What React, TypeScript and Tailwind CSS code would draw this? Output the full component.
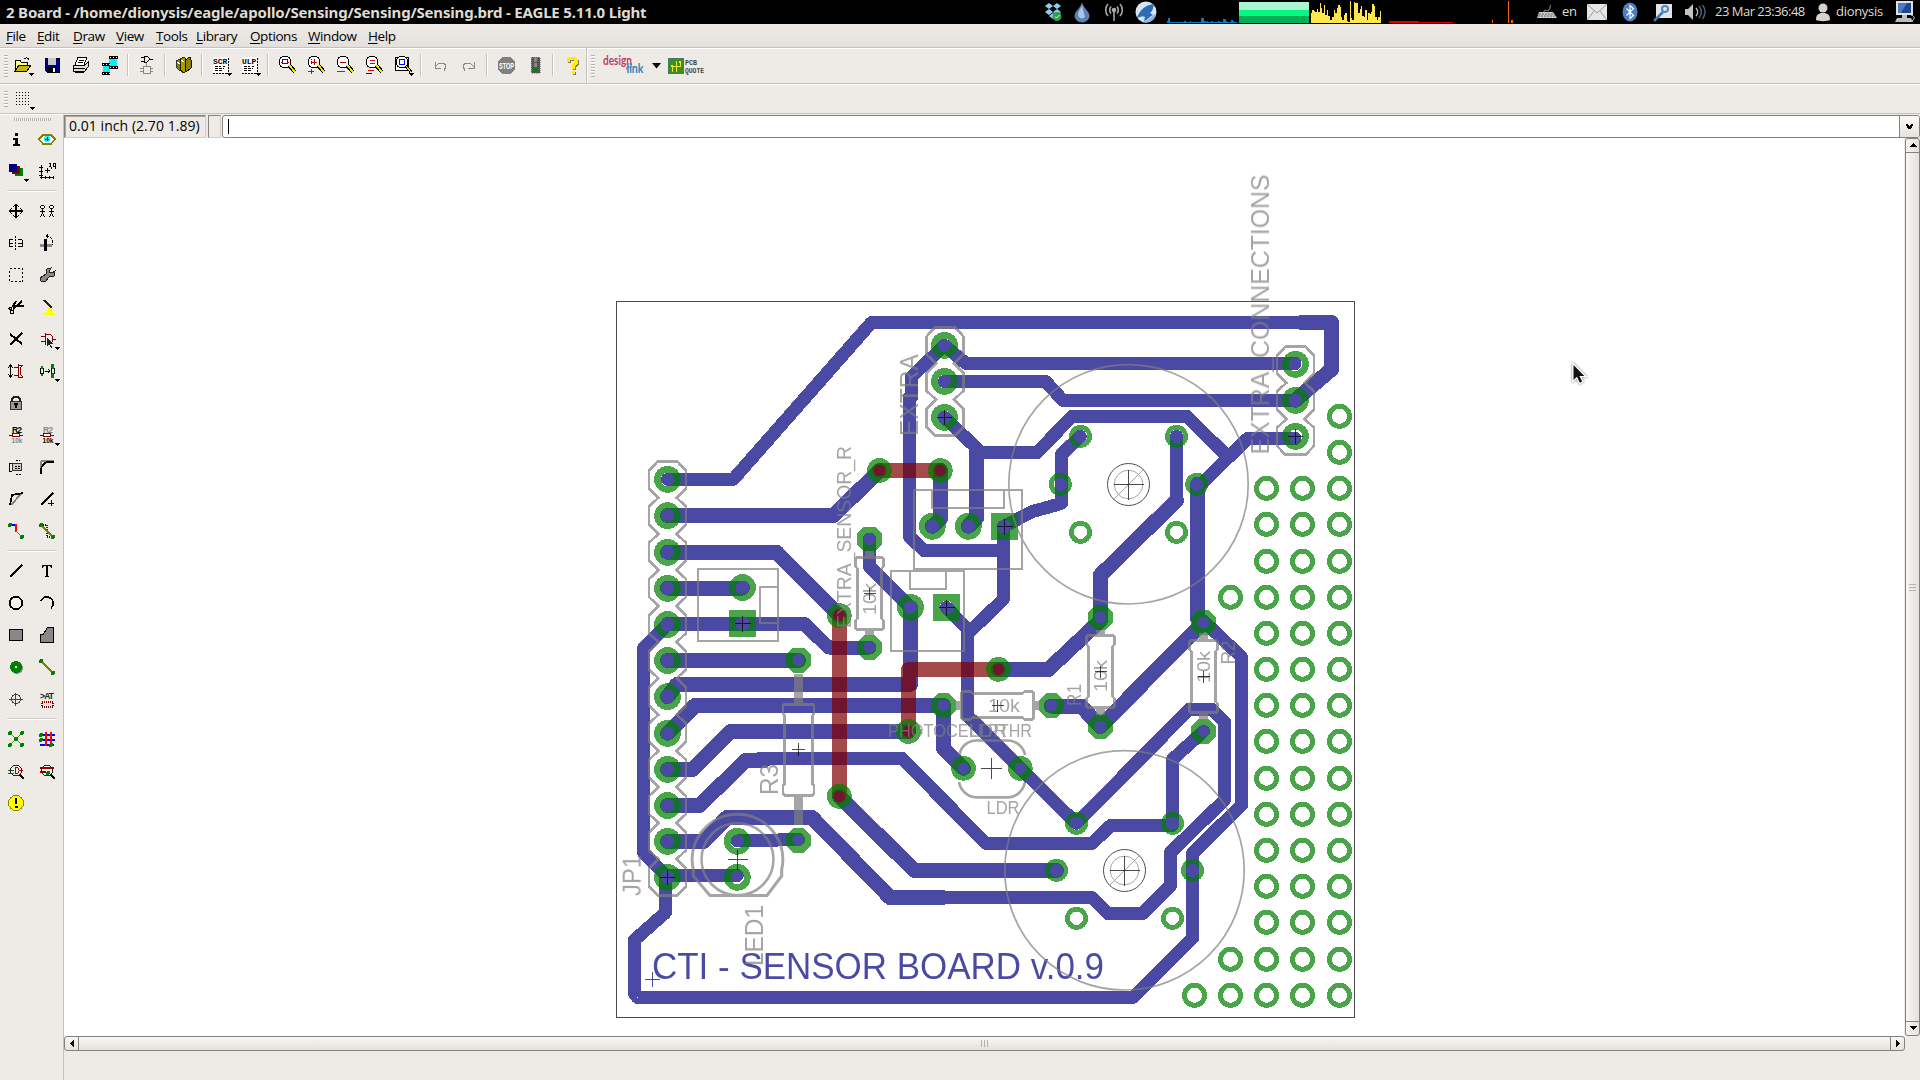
import React from "react";

type Pt = [number, number];
const P = ({ children, w = 24, h = 24, className = "" }: { children: React.ReactNode; w?: number; h?: number; className?: string }) => (
  <svg width={w} height={h} viewBox={`0 0 ${w} ${h}`} className={`shrink-0 ${className}`} fill="none" shapeRendering="crispEdges">
    {children}
  </svg>
);

/* ---------- system tray ---------- */
const cpu = [3, 9, 2, 1, 2, 1, 1, 2, 1, 1, 2, 1, 3, 1, 2, 1, 4, 2, 1, 1, 2, 1, 1, 2, 9, 10, 4, 2, 3, 2, 1, 3, 2, 1, 2, 1, 3, 2, 1, 8, 7, 3, 2, 1, 2, 5, 3, 2, 1];
const net = [14, 18, 17, 16, 20, 16, 28, 22, 15, 26, 12, 19, 10, 5, 4, 9, 19, 14, 22, 26, 23, 8, 4, 12, 14, 3, 2, 31, 7, 4, 30, 29, 28, 14, 20, 25, 10, 8, 18, 5, 14, 13, 16, 27, 24, 8, 5, 9, 17];

const Tray = () => (
  <div className="flex h-6 items-center text-[#dfdbd2]">
    <svg width="18" height="20" viewBox="0 0 18 20">
      <path d="M5 1l4 3-4 3-4-3zM13 1l4 3-4 3-4-3zM5 7l4 3-4 3-4-3zM13 7l4 3-4 3-4-3zM5 14l4-3 4 3-4 3z" fill="#8fcdf7" />
      <circle cx="13" cy="14.500" r="4.500" fill="#2f9e44" />
      <path d="M11 14.500l1.500 1.500 3-3" stroke="#fff" fill="none" />
    </svg>
    <svg width="18" height="22" viewBox="0 0 18 22" className="ml-[11px]">
      <path d="M9 1C8 7 1.500 10 1.500 15a7.500 6.500 0 0015 0C16.500 10 10 7 9 1z" fill="#5b7fae" />
      <path d="M9 4C8 8 5 10 5 14a4 4 0 007 2z" fill="#a9c4e6" />
    </svg>
    <svg width="20" height="20" viewBox="0 0 20 20" className="ml-[13px]" fill="none" stroke="#a5a5a5" strokeWidth="1.600">
      <path d="M4 2a9 9 0 000 12M16 2a9 9 0 010 12M7 4.500a6 6 0 000 7M13 4.500a6 6 0 010 7M10 8v11" />
      <circle cx="10" cy="8" r="1.500" fill="#bbb" />
    </svg>
    <svg width="24" height="24" viewBox="0 0 24 24" className="ml-[10px]">
      <circle cx="12" cy="12" r="10.500" fill="#d7e5f2" />
      <path d="M3 18C6 9 12 5 20 4c-1 4-1 7-4 9l3 2c-3 1-5 5-9 6l1-4c-3-1-5 0-8 1z" fill="#2b6cb3" />
      <path d="M8 22a10.500 10.500 0 0014-8c-4 0-4 6-14 8z" fill="#8fb2d8" />
    </svg>
    <svg width="70" height="24" viewBox="0 0 70 24" className="ml-[9px]" shapeRendering="crispEdges">
      {cpu.map((v, i) => <rect key={i} x={i * 1.43} y={23 - v * 0.55} width="1.430" height={v * 0.55} fill="#0a7ac4" />)}
    </svg>
    <div className="ml-[2px] mt-px h-[21px] w-[70px] bg-[#abf5d0]">
      <div className="h-2" />
      <div className="h-[6px] bg-[#00fb80]" />
      <div className="h-[7px] bg-[#00b058]" />
    </div>
    <svg width="70" height="24" viewBox="0 0 70 24" className="ml-[2px]" shapeRendering="crispEdges">
      {net.map((v, i) => <rect key={i} x={i * 1.43} y={23 - v * 0.7} width="1.430" height={v * 0.7} fill="#fde74a" />)}
    </svg>
    <svg width="64" height="24" viewBox="0 0 64 24" className="ml-2" shapeRendering="crispEdges">
      <path d="M0 21h30v1h34v1H0z" fill="#d80000" />
    </svg>
    <svg width="24" height="24" viewBox="0 0 24 24" className="ml-[38px]" shapeRendering="crispEdges">
      <path d="M1 23v-3h1v3zM17 23V1h1v22zM20 23v-3h2v3z" fill="#f26311" />
    </svg>
    <svg width="22" height="20" viewBox="0 0 22 20" className="ml-[21px]">
      <path d="M3 10h14l4 6H1z" fill="#c9c9c9" />
      <path d="M3 12h15M2 14h17" stroke="#666" strokeDasharray="2 1" />
      <path d="M8 10c0-4 3 0 5-2s0-4 2-5" stroke="#999" fill="none" />
    </svg>
    <span className="ml-[4px] w-[15px] font-['Open_Sans'] text-[13px] tracking-[-0.3px]">en</span>
    <svg width="20" height="16" viewBox="0 0 20 16" className="ml-[10px]">
      <rect width="20" height="16" rx="1" fill="#e6e6e6" />
      <path d="M1 1l9 8 9-8M1 15l6-8M19 15l-6-8" stroke="#999" fill="none" />
    </svg>
    <svg width="16" height="20" viewBox="0 0 16 20" className="ml-[15px]">
      <ellipse cx="8" cy="10" rx="7.500" ry="9.500" fill="#4a7fc4" />
      <path d="M4.500 6.500l7 7L8 16.500v-13l3.500 3-7 7" stroke="#fff" fill="none" strokeWidth="1.200" />
    </svg>
    <svg width="20" height="20" viewBox="0 0 20 20" className="ml-[15px]">
      <path d="M3 2h16v14H3z" fill="#e4e4e4" />
      <path d="M1 19l9-9" stroke="#3e78bd" strokeWidth="2.500" />
      <circle cx="12" cy="7" r="3" fill="none" stroke="#4f86c6" strokeWidth="2" />
    </svg>
    <svg width="22" height="20" viewBox="0 0 22 20" className="ml-[11px]" fill="none">
      <path d="M1 7h3l5-5v16l-5-5H1z" fill="#c4c4c4" />
      <path d="M12 6a6 6 0 010 8" stroke="#bbb" strokeWidth="1.500" />
      <path d="M15 4a9 9 0 010 12M18.500 3a11 11 0 010 14" stroke="#4b5d78" strokeWidth="1.500" />
    </svg>
    <span className="ml-[9px] w-[91px] whitespace-nowrap font-['Open_Sans'] text-[13px] tracking-[-0.5px]">23 Mar 23:36:48</span>
    <svg width="16" height="20" viewBox="0 0 16 20" className="ml-[9px]" fill="#d6d3cc">
      <circle cx="8" cy="6" r="4.500" />
      <path d="M1 18c0-5 2-7 7-7s7 2 7 7c-3 1.500-11 1.500-14 0z" />
    </svg>
    <span className="ml-[5px] w-[49px] font-['Open_Sans'] text-[13px] tracking-[-0.3px]">dionysis</span>
    <svg width="22" height="24" viewBox="0 0 22 24" className="ml-[9px] mr-[4px]">
      <path d="M2 1h17v14H2z" fill="#e1e1df" />
      <path d="M4 3h13v10H4z" fill="#1b4795" />
      <path d="M4 3h9L7 13H4z" fill="#4c7cc0" />
      <path d="M8 15h5v3H8zM3 18h14l2 4H1z" fill="#bdbdb8" />
      <path d="M17 15c4 1 4 4 1 6" stroke="#ddd" fill="none" />
    </svg>
  </div>
);

/* ---------- top toolbar icons ---------- */
const Drop = () => <path d="M17 20h6l-3 3z" fill="#000" />;
const Mag = ({ children }: { children?: React.ReactNode }) => (
  <P>
    <circle cx="10" cy="9" r="6" fill="#fff" stroke="#000" />
    <path d="M14 12l6 7" stroke="#000" strokeWidth="4" />
    <path d="M14 12l6 7" stroke="#f2e600" strokeWidth="2" />
    {children}
  </P>
);
const Sheet = ({ t }: { t: string }) => (
  <P>
    <path d="M4 4h15v16H4z" fill="#fff" />
    <path d="M19 5v15M4 20h15" stroke="#000" strokeDasharray="2 1" />
    <path d="M6 13h6M6 15h9M6 17h7M14 13h2" stroke="#000" strokeDasharray="3 1" />
    <text x="4" y="11" fontSize="8" fontWeight="700" fontFamily="Liberation Mono" fill="#000">{t}</text>
    <Drop />
  </P>
);
const topIcons: React.ReactNode[] = [
  <P><path d="M4 18V7h5l1 2h6v3" stroke="#000" fill="#ffff80" /><path d="M4 18l4-6h12l-4 6z" fill="#c8b400" stroke="#000" /><path d="M13 6c2-2 4-1 5 1" stroke="#000" /><Drop /></P>,
  <P><path d="M5 5h14v14H7l-2-2z" fill="#000080" stroke="#000" /><path d="M8 5h8v7H8z" fill="#c8c8c8" /><path d="M8 14h8v5H8z" fill="#000" /><path d="M13 15h2v4h-2z" fill="#fff" /></P>,
  <P><path d="M9 4h9l-3 8H6z" fill="#fff" stroke="#000" /><path d="M10 7h5M9 9h5" stroke="#000" /><path d="M4 12h12l3-3v5l-3 4H4z" fill="#ddd" stroke="#000" /><path d="M6 19h9M5 15h11" stroke="#000" /><path d="M12 16h3v1h-3z" fill="#e6d800" /></P>,
  <P><path d="M11 6h8v8h-8zM5 13h7v7H5z" fill="#00f2f2" /><path d="M11 4h9M11 14h9M4 11h8M4 20h8" stroke="#000" strokeWidth="3" /><path d="M12 4h8M12 14h8M5 11h8M5 20h8" stroke="#fff" strokeDasharray="1 2" /></P>,
  <P><path d="M9 3h3l3 3-3 3H9zM6 4h3M6 8h3M15 6h3" stroke="#000" /><path d="M8 13h7v7H8zM5 15h3M5 18h3M15 15h3M15 18h3M11 13v-3" stroke="#888" /></P>,
  <P><path d="M4 8l4-2 3 3v10l-4-2-3-3z" fill="#808000" stroke="#333" /><path d="M8 6l4-2 3 3v10l-3 3-4-3z" fill="#a89c00" stroke="#222" /><path d="M13 7l5-3 1 3v8l-5 4z" fill="#8a8200" stroke="#111" /><path d="M5 9l3 2M9 7l3 2" stroke="#fff" /></P>,
  <Sheet t="SCR" />,
  <Sheet t="ULP" />,
  <Mag><rect x="7.500" y="6.500" width="5" height="4" stroke="#00f" /><path d="M6 9h2M12 9h2" stroke="#d00" /></Mag>,
  <Mag><path d="M10 6v6M7 9h6" stroke="#c00" /><path d="M7 6v5" stroke="#00f" strokeDasharray="1 1" /><path d="M7 16v5M4 18.500h6" stroke="#d00" /></Mag>,
  <Mag><path d="M7 9h6" stroke="#b00" /><path d="M4 18.500h8" stroke="#b0b" /></Mag>,
  <Mag><path d="M8 7.500h5M8 10.500h5" stroke="#d00" /><path d="M6 17.500h6" stroke="#d00" /><path d="M4 20.500h6" stroke="#00f" /></Mag>,
  <P><path d="M4 4h13v13H4z" stroke="#000" fill="#fff" /><circle cx="11" cy="9" r="6" fill="#fff" stroke="#000" /><rect x="8.500" y="6.500" width="5" height="5" stroke="#00f" /><path d="M15 13l5 6" stroke="#000" strokeWidth="3" /><path d="M15 13l5 6" stroke="#f2e600" /><Drop /></P>,
  <P><path d="M7 9v6h6M7 14l4-4h5l2 3-2 5" stroke="#888" /></P>,
  <P><path d="M17 9v6h-6M17 14l-4-4H8l-2 3 2 5" stroke="#888" /></P>,
  <P><path d="M8 4h9l4 5v7l-4 5H8l-4-5V9z" fill="#808080" /><text x="5" y="16" fontSize="9" textLength="15" lengthAdjust="spacingAndGlyphs" fontWeight="700" fontFamily="Liberation Sans" fill="#fff">STOP</text></P>,
  <P><path d="M8 4h9v16H8z" fill="#555" /><path d="M8 4h9v16H8z" stroke="#999" strokeDasharray="1 1" /><circle cx="12.500" cy="7" r="2" fill="#888" /><circle cx="12.500" cy="12" r="2" fill="#888" /><circle cx="12.500" cy="17" r="2.500" fill="#008a00" /></P>,
  <P><path d="M8 9V7l2-2h4l2 2v3l-3 3v3M13 18v3" stroke="#777" strokeWidth="3" transform="translate(1 1)" /><path d="M8 9V7l2-2h4l2 2v3l-3 3v3M13 18v3" stroke="#ffee00" strokeWidth="3" /></P>,
];
const Sep = () => <div className="flex h-[22px] w-2 shrink-0 justify-center"><div className="w-[2px] border-l border-[#c4c1bc] bg-white" /></div>;
const sepAfter = [3, 4, 5, 7, 12, 14, 16];

/* ---------- left palette icons ---------- */
const R2 = ({ a, b, drop }: { a: string; b: string; drop?: boolean }) => (
  <P className="overflow-visible">
    <text x="8" y="9.500" fontSize="8.500" textLength="10" fontFamily="Liberation Sans" fontWeight="700" fill={a}>R2</text>
    <path d="M5 12h14" stroke="#800000" /><path d="M8.500 10.500h7v3h-7z" stroke="#800000" fill="#fff" />
    <text x="7.500" y="20" fontSize="8" textLength="11" lengthAdjust="spacingAndGlyphs" fontFamily="Liberation Sans" fontWeight="700" fill={b}>10k</text>
    {drop && <path d="M20 20h5l-2.500 3z" fill="#000" />}
  </P>
);
const G = "#008000";
const Dot = ({ x, y }: { x: number; y: number }) => <circle cx={x} cy={y} r="2" fill={G} />;
const D2 = () => <path d="M20 20h5l-2.500 3z" fill="#000" />;
const pal: (React.ReactNode | null)[][] = [
  [
    <P><path d="M11 6h3v3h-3zM9 11h5v6h2v2H9v-2h2v-4H9z" fill="#000" /></P>,
    <P><path d="M4 12l4-4h8l4 4-4 5H8z" fill="#fff" stroke="#808000" strokeWidth="1.500" /><circle cx="12" cy="12" r="3" fill="#0ff" /><path d="M12 10v4M10 12h4" stroke="#004" /></P>,
    <P className="overflow-visible"><path d="M11 9h8v8h-8z" fill={G} /><path d="M8 7h8v8H8z" fill="#800000" /><path d="M5 5h8v8H5z" fill="#000080" /><path d="M20 20h5l-2.500 3z" fill="#000" /></P>,
    <P><path d="M6.500 6v14M5 18.500h14M4 8h4M4 12h4M4 16h4M10 17v3M14 17v3M18 17v3M10 11.500h5M12.500 9v5" stroke="#000" /><path d="M13.500 4.500h2v3h-2M18.500 4.500h1.500v3h-1.500zM16 8v2M20 8v2" stroke="#000" /></P>,
  ],
  [
    <P><path d="M5 12h14M12 5v14M8 9l-3 3 3 3M16 9l3 3-3 3M9 8l3-3 3 3M9 16l3 3 3-3" stroke="#000" strokeWidth="1.300" /></P>,
    <P>{[7.5, 16.5].map((x) => <g key={x} stroke="#000"><circle cx={x} cy="8" r="1.800" fill="#fff" /><path d={`M${x} 10v4l-2 4M${x} 14l2 4M${x - 2.5} 12h5`} /></g>)}</P>,
    <P><path d="M11.500 5v14" stroke="#000" strokeDasharray="2 1" /><path d="M5.500 8.500v7M5 8.500h4M5 12h4M5 15.500h4M18.500 8.500v7M18 8.500h-4M18 12h-4M18 15.500h-4" stroke="#000" /></P>,
    <P><path d="M5 13h12v3H5z" fill="#888" /><path d="M9 8h3v12H9z" fill="#000" /><path d="M11 5c5 0 7 3 7 9" stroke="#000" strokeDasharray="3 1" /><path d="M13 3v4l-3-2z" fill="#000" /></P>,
    <P><path d="M5.500 5.500h13v13h-13z" stroke="#000" strokeDasharray="2 2" /></P>,
    <P><path d="M6 18l-1-3 6-4 1-5 4-1-2 4 3 1 3-2-1 5-5 1-4 5z" fill="#888" stroke="#222" /></P>,
    <P><path d="M18 6l-9 8M20 11H9l3-5" stroke="#000" strokeWidth="2" /><circle cx="8" cy="17" r="2" stroke="#000" /><circle cx="6.500" cy="13.500" r="1.500" stroke="#000" /></P>,
    <P><path d="M8 5l9 8M10 5l7 8" stroke="#222" strokeWidth="1.300" /><path d="M14 12l3 3v2l3 2v1h-11v-2l3-1z" fill="#ff0" /></P>,
    <P><path d="M6 7l12 10M18 6L6 18" stroke="#000" strokeWidth="2" /></P>,
    <P className="overflow-visible"><path d="M10.500 6v12M10 7h4c5 1 5 9 0 10M6 9h4M6 14h4M17 12h4" stroke="#800000" /><path d="M12 11v8l2-2 2 4 1-1-2-3h3z" fill="#222" /><D2 /></P>,
    <P><path d="M6.500 7v10M4 9l2.500-3L9 9M4 15l2.500 3L9 15" stroke="#000" /><path d="M10 8h4M10 16h4M14 5v14M14 6h5M14 18h5M19 6l-3 3v6l3 3" stroke="#800000" /></P>,
    <P className="overflow-visible"><path d="M5.500 9.500h3v5h-3zM16 9.500h3v5h-3z" stroke="#000" /><path d="M10 12h4M13 10l2 2-2 2" stroke="#000" /><path d="M7 7v3M7 15v2M17.500 7v3M17.500 14v4" stroke={G} strokeWidth="2" /><Dot x={17.5} y={7} /><Dot x={17.5} y={17} /><D2 /></P>,
    <P><path d="M8 11V8l2-2h4l2 2v3" stroke="#222" strokeWidth="1.500" /><path d="M6.500 10.500h11v8h-11z" fill="#999" stroke="#333" /><path d="M12 12v5M10 13h4" stroke="#000" strokeWidth="1.500" /></P>,
    null,
    <R2 a="#000" b="#888" />,
    <R2 a="#888" b="#000" drop />,
    <P><path d="M8.500 8.500h9v7h-9z" stroke="#333" fill="#ccc" /><path d="M5.500 8v9M5 8h3M5 16h3" stroke="#000" /><path d="M12 5.500h4M12 19.500h5M11 11h5M11 13.500h5" stroke="#000" strokeDasharray="2 1" /></P>,
    <P><path d="M6 6h13M6 6v13" stroke="#888" strokeWidth="2" /><path d="M6 19v-3c0-5 3-9 9-9.500h4" stroke="#000" strokeWidth="2" /></P>,
    <P><path d="M18 6L7 18" stroke="#888" strokeWidth="2" /><path d="M6 18l2-10 11-2" stroke="#000" strokeWidth="1.800" /></P>,
    <P><path d="M6 18L18 6" stroke="#000" strokeWidth="2" /><path d="M16 13v6M13 16h6" stroke="#000" /></P>,
    <P><path d="M6 6h6" stroke="#00f" strokeWidth="2" /><path d="M12 5v8" stroke="#f00" strokeWidth="2" /><path d="M12 12l6 6" stroke="#808000" /><Dot x={6} y={6} /><Dot x={18} y={18} /></P>,
    <P><path d="M6 6h6M12 18h6" stroke="#00f" strokeDasharray="1 1" strokeWidth="2" /><path d="M12 6v12" stroke="#800000" strokeDasharray="1 1" strokeWidth="2" /><path d="M6 6l12 12" stroke="#808000" strokeWidth="1.500" /><Dot x={6} y={6} /><Dot x={18} y={18} /></P>,
  ],
  [
    <P><path d="M6 18L18 6" stroke="#000" strokeWidth="2" /></P>,
    <P><path d="M7 9V6h10v3h-1l-1-2h-2v10l2 1H9l2-1V7H9L8 9z" fill="#000" /></P>,
    <P><circle cx="12" cy="12" r="6.300" stroke="#000" strokeWidth="1.800" fill="#fff" fillOpacity=".3" /></P>,
    <P><path d="M6 10a6.300 6.300 0 1110 7" stroke="#000" strokeWidth="1.800" /></P>,
    <P><rect x="5.500" y="6.500" width="13" height="11" fill="#888" stroke="#000" /></P>,
    <P><path d="M5.500 19.500V12l3-1 4-6.500h6v15z" fill="#888" stroke="#000" /></P>,
    <P><circle cx="13" cy="13" r="6" fill="#888" /><circle cx="12" cy="12" r="6" fill={G} /><path d="M11 11h2v2h-2z" fill="#fff" /></P>,
    <P><path d="M6 6l12 12" stroke="#808000" strokeWidth="1.500" /><Dot x={6} y={6} /><Dot x={18} y={18} /></P>,
    <P><circle cx="12" cy="12" r="4.500" stroke="#444" /><path d="M5 12.500h14M11.500 6v13" stroke="#444" /></P>,
    <P><text x="5" y="12" fontSize="8.500" textLength="14" fontFamily="Liberation Sans" fontWeight="700" fill="#222">&gt;AT</text><path d="M6.500 14.500h11v5h-11z" stroke="#800000" strokeDasharray="1 1" strokeWidth="2" /></P>,
  ],
  [
    <P><path d="M6 6l12 12M18 6L6 18" stroke="#808000" /><Dot x={6} y={6} /><Dot x={18} y={6} /><Dot x={12} y={12} /><Dot x={6} y={18} /><Dot x={18} y={18} /></P>,
    <P><path d="M5 8h15M5 13h15M5 18h14" stroke="#00f" strokeWidth="1.500" /><path d="M11 5v14M16 5v14" stroke="#f00" strokeWidth="2" /><Dot x={6} y={8} /><Dot x={6} y={13} /><Dot x={16} y={18} /></P>,
    <P><path d="M4 11h6M4 14h6" stroke={G} /><circle cx="12" cy="11.500" r="5.500" stroke="#222" /><path d="M11 8v7M11 8.500h2c3 1 3 5 0 6h-2M15 11.500h4" stroke="#a00" /><path d="M16 16l4 4" stroke="#000" strokeWidth="2" /></P>,
    <P><circle cx="12" cy="11.500" r="5.500" stroke="#222" fill="#fff" /><path d="M5 9h14M5 13h6" stroke="#900" strokeWidth="2" /><Dot x={13} y={14} /><path d="M16 16l4 4" stroke="#000" strokeWidth="2" /></P>,
    <P><circle cx="12" cy="12" r="7.500" fill="#ff0" stroke="#8a8a00" /><path d="M11 7h2.500l-.5 6h-1.500zM11 15h2.500v2H11z" fill="#000" /></P>,
    null,
  ],
];

/* ---------- board ---------- */
const bottom: [number, string][] = [
  [13, "667.5,479.3 733.3,479.3 871.5,322.5 1302,322.5"],
  [15, "1302,322.5 1331.5,322.5 1331.5,369.3 1295.3,400.3"],
  [15, "667.5,515.5 833.5,515.5 879.5,470.5"],
  [15, "667.5,552.3 776.7,552.3 839.3,615.3"],
  [15, "667.5,588 742.5,588"],
  [14, "667.5,624 804.5,624 828.7,647.5 869.5,647.5"],
  [13, "667.5,624.3 643.5,648.5 643.5,852.5 667.5,877.3"],
  [15, "667.5,660.5 798.5,660.5"],
  [15, "667.5,696.7 677,684.3 910.5,684.3 910.5,607.5"],
  [13, "869.5,539 869.5,566.5 910.5,607.5"],
  [15, "667.5,733.3 695,705.5 943.5,705.5 943.5,748.3 963.5,768.3"],
  [15, "667.5,769.5 692.3,769.5 730.7,731.5 908.5,731.5"],
  [15, "667.5,805.5 699.5,805.5 745.7,760.5 764,760.5"],
  [13, "760,758.5 902.3,758.5 985.5,843.3 1092.3,843.3 1110.7,825.5 1172.3,825.5"],
  [13, "1172.5,823.3 1172.5,759.3 1203.5,731.3"],
  [15, "667.5,841.5 703.5,841.5 727,817.5 812,817.5 890,897.5 942,897.5"],
  [13, "942,897.5 1091.7,897.5 1108,913.5 1142.7,913.5 1170.5,885.7 1170.5,852.3 1224.5,800 1224.5,722 1211.7,709.3 1189.3,709.3 1076.3,823.3 1020.3,768.3 967.5,715.7 967.5,629 946.5,607.5"],
  [13, "967.5,634 1003.5,599 1003.5,526.3"],
  [13, "737.3,841 798.5,839.5"],
  [13, "667.5,875.5 737.3,875.5"],
  [13, "665.5,877.3 665.5,912.5 634.5,940 634.5,994 637.5,997.5 1132.7,997.5 1192.5,938.3 1192.5,853.3 1241.5,805 1241.5,657 1203.5,621"],
  [15, "839.3,796.3 914.3,870.5 1056.5,870.5"],
  [15, "998.3,669.5 1048.3,669.5 1100.5,620.5 1100.5,575 1176.5,500.5"],
  [13, "1176.5,500.5 1176.5,436.3"],
  [15, "1197.5,484.3 1197.5,618 1203.3,622.3 1100.3,726.7 1081,706 1051.3,706"],
  [13, "1196.7,484.3 1201,484.3 1247.7,438.5 1295,438.5"],
  [13, "1227,456 1187,416.5 1071.7,416.5 1037.3,452.5 981,452.5"],
  [13, "944.3,417.3 978.5,450"],
  [15, "976.5,450 976.5,518 968.3,526.3"],
  [13, "944.3,345.3 966,363.5 1295,363.5"],
  [13, "944.3,381.5 1045.7,381.5 1063,400.5 1295.3,400.5"],
  [13, "944.3,345.3 911.5,377 911.5,397"],
  [13, "909.5,397 909.5,536.7 924,550.5 1003.5,550.5"],
  [15, "940.5,470.3 940.5,518.3 932.3,526.3"],
  [13, "1004.3,526.3 1031.7,511.7 1058.5,504.3 1061.5,503 1061.5,454.3 1080.3,436.3"],
];
const top: string[] = ["879.5,470.5 940.3,470.5", "839.5,615.5 839.5,796.3", "908.5,731.5 908.5,669.5 998.3,669.5"];

const x0 = 667.5;
const headerPads: Pt[] = [
  ...[479.3, 515.7, 552.3, 588.3, 624.5, 660.5, 696.7, 733.3, 769.3, 805.5, 841.3, 877.3].map((y): Pt => [x0, y]),
  [944.5, 345.3], [944.5, 381.3], [944.5, 417.3], [1295.5, 364.3], [1295.5, 400.3], [1295.5, 436.3],
  [742.5, 587.5], [737.3, 841.3], [737.3, 877.3], [932.3, 526.3], [968.3, 526.3], [910.5, 607.3],
];
const squarePads: Pt[] = [[742.5, 623.5], [1004.3, 526.3], [946.7, 607.3]];
const octPads: Pt[] = [[869.5, 539], [869.5, 647.3], [798.5, 660], [798.5, 840.3], [943.5, 705.3], [1051.3, 705.5], [1100.5, 617.5], [1100.5, 726.7], [1203.5, 622.3], [1203.5, 731.3]];
const vias: Pt[] = [[879.5, 470.5], [940.3, 470.5], [839.3, 615.5], [839.3, 796.3], [908.5, 731.5], [998.5, 669.3], [963.5, 768.3], [1020.3, 768.3]];
const smallPads: Pt[] = [[1080.5, 436.3], [1176.5, 436.3], [1060.3, 484.3], [1196.7, 484.3], [1080.5, 532.3], [1176.5, 532.3], [1076.5, 823.3], [1172.5, 823.3], [1056.5, 870.3], [1192.5, 870.3], [1076.5, 918.3], [1172.5, 918.3]];
const rows = [488.3, 524.3, 561.3, 597.3, 633.3, 669.3, 705.3, 741.3, 778.3, 814.3, 850.3, 886.3, 922.3, 959.3, 995.3];
const grid: Pt[] = [
  ...[416.3, 452.3, ...rows].map((y): Pt => [1339.5, y]),
  ...rows.flatMap((y): Pt[] => [[1266.5, y], [1302.5, y]]),
  [1230.5, 597.3], [1230.5, 959.3], [1230.5, 995.3], [1194.5, 995.3],
];
const octagon = (x: number, y: number, r: number) => {
  const k = r * 0.414;
  return `M${x - k} ${y - r}L${x + k} ${y - r}L${x + r} ${y - k}L${x + r} ${y + k}L${x + k} ${y + r}L${x - k} ${y + r}L${x - r} ${y + k}L${x - r} ${y - k}z`;
};
const hole = (x: number, y: number, r: number) => `M${x - r} ${y}a${r} ${r} 0 1 0 ${2 * r} 0a${r} ${r} 0 1 0 ${-2 * r} 0z`;

const header = (cx: number, y: number, n: number) => {
  const right: string[] = [];
  const left: string[] = [];
  for (let i = 0; i < n; i++) {
    const c = y + i * 36.17;
    right.push(`${cx + 18.5},${c - 9} ${cx + 18.5},${c + 9}`);
    left.unshift(`${cx - 18.5},${c + 9} ${cx - 18.5},${c - 9}`);
    if (i < n - 1) {
      right.push(`${cx + 9},${c + 18.1}`);
      left.unshift(`${cx - 9},${c + 18.1}`);
    }
  }
  const b = y + (n - 1) * 36.17 + 18;
  return [`${cx - 10},${y - 18} ${cx + 10},${y - 18}`, ...right, `${cx + 10},${b} ${cx - 10},${b}`, ...left].join(" ");
};

const Resistor = ({ x, y, l = 36, w = 14, waist = 12, rot = 0 }: { x: number; y: number; l?: number; w?: number; waist?: number; rot?: number }) => (
  <path
    transform={`translate(${x} ${y}) rotate(${rot})`}
    d={`M${-w + 1.5} ${-l}H${w - 1.5}L${w} ${1.5 - l}V${9 - l}L${waist} ${11 - l}V${l - 11}L${w} ${l - 9}V${l - 1.5}L${w - 1.5} ${l}H${-w + 1.5}L${-w} ${l - 1.5}V${l - 9}L${-waist} ${l - 11}V${11 - l}L${-w} ${9 - l}V${1.5 - l}z`}
    strokeWidth="2.700"
  />
);

const Label = ({ x, y, size, len, up, children }: { x: number; y: number; size: number; len: number; up?: boolean; children: string }) => (
  <text
    transform={up ? `translate(${x} ${y}) rotate(-90)` : `translate(${x} ${y})`}
    fontSize={size}
    textLength={len}
    lengthAdjust="spacingAndGlyphs"
    fontFamily="Liberation Sans, sans-serif"
    fill="#808080"
    stroke="none"
  >
    {children}
  </text>
);

const crosses: [number, number, number][] = [
  [944.5, 417.5, 7.5], [1295.5, 436.5, 7.5], [667.5, 877.5, 7.5], [742.5, 623.5, 8], [1004.5, 526.5, 8], [946.5, 607.5, 8],
  [869.5, 593.5, 6], [798.5, 749.5, 6.5], [997.5, 705.5, 6], [1100.5, 671.5, 6], [1203.5, 676.5, 6], [991.5, 768.5, 10.5], [737.5, 859.5, 10],
];

const Board = () => (
  <svg width="1840" height="898" viewBox="64 138 1840 898" className="block" fill="none">
    <g opacity=".706" stroke="#000080" strokeLinecap="round" strokeLinejoin="round" shapeRendering="crispEdges">
      {bottom.map(([w, p], i) => <polyline key={i} points={p} strokeWidth={w} />)}
      <path d="M644.500 979.500h15.500M652.500 971.500v15.500" strokeWidth="1" strokeLinecap="butt" />
      <text x="652" y="978.700" fontSize="37" textLength="452" lengthAdjust="spacingAndGlyphs" fontFamily="Liberation Sans, sans-serif" fill="#000080" stroke="none">CTI - SENSOR BOARD v.0.9</text>
    </g>
    <g opacity=".706" stroke="#800000" strokeWidth="15" strokeLinecap="round" strokeLinejoin="round" shapeRendering="crispEdges">
      {top.map((p) => <polyline key={p} points={p} />)}
    </g>
    <g opacity=".706" fill="#008000" fillRule="evenodd" shapeRendering="crispEdges">
      {headerPads.map(([x, y]) => <path key={`${x}-${y}`} d={hole(x, y, 13.4) + octagon(x, y, 6.5)} />)}
      {squarePads.map(([x, y]) => <path key={`${x}-${y}`} d={`M${x - 13.5} ${y - 13.5}h27v27h-27z` + octagon(x, y, 6.5)} />)}
      {octPads.map(([x, y]) => <path key={`${x}-${y}`} d={octagon(x, y, 12.5) + octagon(x, y, 5.8)} />)}
      {vias.map(([x, y]) => <path key={`${x}-${y}`} d={hole(x, y, 12.4) + hole(x, y, 5.8)} />)}
      {smallPads.map(([x, y]) => <path key={`${x}-${y}`} d={hole(x, y, 11.5) + octagon(x, y, 6.3)} />)}
      {grid.map(([x, y]) => <path key={`${x}-${y}`} d={hole(x, y, 12.5) + hole(x, y, 7.5)} />)}
    </g>
    <g opacity=".706" stroke="#808080" strokeWidth="2">
      <g strokeWidth="2.700" shapeRendering="crispEdges">
        <polygon points={header(667.5, 479.5, 12)} />
        <polygon points={header(945, 345.5, 3)} />
        <polygon points={header(1295.5, 364.5, 3)} />
      </g>
      <g shapeRendering="crispEdges">
        <path d="M698 569h80v72h-80zM778 587h-18v36h18M914 490h108v79H914zM932 490v18h72v-18M891 571h73v80h-73zM910 571v18h36v-18" />
        <path d="M869.500 551v6M869.500 630v5M1100.500 630v6M1100.500 707v8M1203.500 633v7M1203.500 714v5M798.500 674v30M798.500 796v29M956 705.500h6M1034 705.500h5" strokeWidth="9" />
        <Resistor x={869.5} y={593.5} />
        <Resistor x={1100.5} y={671.5} />
        <Resistor x={1203.5} y={676.5} />
        <Resistor x={997.5} y={705.5} rot={90} />
        <Resistor x={798.5} y={749.7} l={45.5} w={15.5} waist={14.3} />
      </g>
      <path d="M959.500 755c1-8 8-14.500 17-14.500h31c9 0 16 6.500 17.500 14.500M1025 782c-1.500 8-8 15.300-17.500 15.300h-31c-9 0-16-7-17.500-15.300" strokeWidth="2.700" />
      <circle cx="737.500" cy="859.300" r="36" strokeWidth="2.500" />
      <path d="M710 895.500H767L781.700 876V869.500A45.300 45.300 0 1 0 693.300 869.500V876z" strokeWidth="3" />
      <circle cx="1128.500" cy="484.300" r="119.700" strokeWidth="1.700" />
      <circle cx="1124.500" cy="870.300" r="119.700" strokeWidth="1.700" />
      {[[1128.5, 484.5], [1124.5, 870.5]].map(([x, y]) => (
        <g key={x} strokeWidth="1">
          <circle cx={x} cy={y} r="14.300" />
          <path d={`M${x - 15} ${y + 15}L${x + 15} ${y - 15}`} />
        </g>
      ))}
      <Label up x={917.7} y={436} size={25} len={82}>EXTRA</Label>
      <Label up x={851} y={628} size={19.5} len={182}>EXTRA_SENSOR_R</Label>
      <Label up x={1269} y={454.5} size={26} len={280}>EXTRA_CONNECTIONS</Label>
      <Label up x={640.7} y={896} size={25} len={41}>JP1</Label>
      <Label up x={762.7} y={966} size={25} len={61}>LED1</Label>
      <Label up x={778} y={795} size={25} len={31}>R3</Label>
      <Label up x={1081} y={706} size={19.5} len={22}>R1</Label>
      <Label up x={1235} y={664.5} size={19.5} len={24}>R2</Label>
      <Label up x={876} y={615} size={18.5} len={32}>10k</Label>
      <Label up x={1106.7} y={692} size={18.5} len={32}>10k</Label>
      <Label up x={1210} y={683} size={18.5} len={32}>10k</Label>
      <Label x={988} y={712.3} size={18.5} len={32}>10k</Label>
      <Label x={888} y={736.7} size={17.5} len={99}>PHOTOCELL</Label>
      <Label x={969} y={736.7} size={17.5} len={38}>LDR</Label>
      <Label x={988} y={736.7} size={17.5} len={44}>PTHR</Label>
      <Label x={986.5} y={813.7} size={17.5} len={33}>LDR</Label>
    </g>
    <g opacity=".706" stroke="#000" strokeWidth="1" shapeRendering="crispEdges">
      <rect x="616.500" y="301.500" width="738" height="716" />
      <circle cx="1128.500" cy="484.500" r="21" shapeRendering="auto" />
      <circle cx="1124.500" cy="870.500" r="21" shapeRendering="auto" />
      {[...crosses, [1128.5, 484.5, 15], [1124.5, 870.5, 15]].map(([x, y, r], i) => (
        <path key={i} d={`M${x - r} ${y}h${2 * r}M${x} ${y - r}v${2 * r}`} />
      ))}
    </g>
    <path d="M1573.500 365v15l3.500-3.300 2.800 6 2.400-1.200-2.800-5.500h5z" fill="#111" stroke="#fff" strokeWidth="2.600" paintOrder="stroke" className="drop-shadow-[0_0_1px_#666]" />
  </svg>
);

const Arrow = ({ d }: { d: string }) => (
  <svg width="15" height="15" viewBox="0 0 15 15" className="absolute inset-0 m-auto" shapeRendering="crispEdges"><path d={d} fill="#000" /></svg>
);

const menus: [string, string][] = [
  ["File", "w-[31px]"], ["Edit", "w-[36px]"], ["Draw", "w-[43px]"], ["View", "w-[40px]"], ["Tools", "w-[40px]"],
  ["Library", "w-[54px]"], ["Options", "w-[58px]"], ["Window", "w-[60px]"], ["Help", "w-[40px]"],
];

export default function App() {
  return (
    <div className="flex h-[1080px] w-[1920px] flex-col overflow-hidden bg-[#eeebe7] font-['Open_Sans'] text-black">
      <div className="flex h-6 shrink-0 items-center justify-between bg-black">
        <span className="whitespace-nowrap pl-[6px] font-['Noto_Sans'] text-[15px] font-bold leading-6 tracking-[-0.18px] text-[#dfdbd2]">
          2 Board - /home/dionysis/eagle/apollo/Sensing/Sensing/Sensing.brd - EAGLE 5.11.0 Light
        </span>
        <Tray />
      </div>

      <div className="flex h-[23px] shrink-0 items-center bg-linear-to-b from-[#efebe7] to-[#e3dfda] pl-[6px] text-[13.5px] tracking-[-0.4px]">
        {menus.map(([m, w]) => (
          <span key={m} className={`${w} shrink-0 pt-px`}>
            <span className="underline underline-offset-2">{m[0]}</span>{m.slice(1)}
          </span>
        ))}
      </div>

      <div className="flex h-9 shrink-0 items-center border-t border-[#c5c2bd] shadow-[inset_0_1px_0_#fff]">
        <div className="ml-1 h-[22px] w-1 shrink-0 bg-[repeating-linear-gradient(to_bottom,#b5b2ad_0_1px,#fff_1px_2px,#eeebe7_2px_3px)]" />
        <div className="flex items-center pb-px">
          {topIcons.map((ic, i) => (
            <React.Fragment key={i}>
              <div className="flex w-[29px] shrink-0 justify-center">{ic}</div>
              {sepAfter.includes(i) && <Sep />}
            </React.Fragment>
          ))}
        </div>
        <div className="h-9 w-[2px] border-l border-[#c5c2bd] bg-white" />
        <div className="ml-[3px] h-[22px] w-1 bg-[repeating-linear-gradient(to_bottom,#b5b2ad_0_1px,#fff_1px_2px,#eeebe7_2px_3px)]" />
        <svg width="44" height="22" viewBox="0 0 44 22" className="ml-2 overflow-visible">
          <text x="0" y="10" fontSize="13" textLength="29" lengthAdjust="spacingAndGlyphs" fontFamily="Lato" fontWeight="700" fill="#c23a68">design</text>
          <path d="M28 8v4h-4v3" stroke="#c23a68" fill="none" />
          <text x="23.500" y="18" fontSize="13" textLength="17" lengthAdjust="spacingAndGlyphs" fontFamily="Lato" fontWeight="700" fill="#2f86b5">link</text>
        </svg>
        <svg width="9" height="6" viewBox="0 0 9 6" className="ml-[5px]"><path d="M0 0h9L4.500 5.500z" fill="#000" /></svg>
        <svg width="40" height="18" viewBox="0 0 40 18" className="ml-[7px] overflow-visible" shapeRendering="crispEdges">
          <rect x=".5" y="1.500" width="15" height="15" fill="#3f8f1f" stroke="#476" />
          <path d="M4 15V9M8 4v11M12 4v5H8M4 9h4" stroke="#e8e832" fill="none" />
          <circle cx="4" cy="9" r="1.500" fill="#e8e832" /><circle cx="12" cy="5" r="1.500" fill="#e8e832" />
          <text x="17" y="8" fontSize="8" textLength="12" lengthAdjust="spacingAndGlyphs" fontFamily="Liberation Mono" fontWeight="700" fill="#444">PCB</text>
          <text x="17" y="16" fontSize="8" textLength="19" lengthAdjust="spacingAndGlyphs" fontFamily="Liberation Mono" fontWeight="700" fill="#444">QUOTE</text>
        </svg>
      </div>

      <div className="flex h-[30px] shrink-0 items-center border-t border-[#c5c2bd] shadow-[inset_0_1px_0_#fff]">
        <div className="ml-1 h-4 w-1 bg-[repeating-linear-gradient(to_bottom,#b5b2ad_0_1px,#fff_1px_2px,#eeebe7_2px_3px)]" />
        <P className="ml-[3px]"><path d="M5 5.500h14M5 8.500h14M5 11.500h14M5 14.500h14M5 17.500h14" stroke="#000" strokeDasharray="1 2" /><path d="M18 20h6l-3 3z" fill="#000" /></P>
      </div>

      <div className="flex min-h-0 flex-1 border-t border-[#c5c2bd]">
        <div className="w-16 shrink-0 border-r border-t border-r-[#c5c2bd] border-t-white">
          <div className="ml-[14px] mt-[3px] h-[3px] w-[37px] bg-[repeating-linear-gradient(to_right,#b5b2ad_0_1px,#f5f3f0_1px_2px)]" />
          <div className="h-[2px]" />
          {pal.map((sec, s) => (
            <div key={s}>
              {s > 0 && (
                <div className="flex h-2 items-center">
                  <div className="ml-[7px] h-[2px] w-[50px] border-t border-[#d0cdc8] bg-white" />
                </div>
              )}
              <div className="grid auto-rows-[32px] grid-cols-[31px_31px]">
                {sec.map((ic, i) => <div key={i} className="flex items-center justify-center">{ic}</div>)}
              </div>
            </div>
          ))}
        </div>

        <div className="flex min-w-0 flex-1 flex-col">
          <div className="flex h-[24px] shrink-0 pt-px">
            <div className="h-[23px] w-[142px] whitespace-nowrap border border-b-[#d0cdc8] border-l-[#85817c] border-r-[#d0cdc8] border-t-[#85817c] pl-[4px] text-[14px] leading-[20px] tracking-[0.05px] shadow-[inset_1px_1px_0_#aaa6a0]">
              0.01 inch (2.70 1.89)
            </div>
            <div className="ml-[2px] h-[23px] w-[13px] border border-b-[#d0cdc8] border-l-[#85817c] border-r-[#d0cdc8] border-t-[#85817c]" />
            <div className="ml-px flex h-[23px] flex-1 rounded-[3px] border border-[#85817c] bg-white">
              <div className="ml-[5px] mt-[3px] h-[15px] w-px bg-black" />
              <div className="relative ml-auto w-[20px] rounded-r-[2px] border-l border-[#85817c] bg-linear-to-b from-[#fbfaf9] to-[#e6e2dd]">
                <Arrow d="M4 5h2v1h1v1h1V6h1V5h2v2h-1v2H9v1H6V9H5V7H4z" />
              </div>
            </div>
          </div>

          <div className="flex h-[898px] shrink-0">
            <div className="w-[1840px] shrink-0 overflow-hidden bg-white"><Board /></div>
            <div className="ml-px flex w-[15px] flex-col rounded-[3px] border border-[#85817c] bg-linear-to-r from-[#f8f7f5] to-[#e5e1dc]">
              <div className="relative h-[14px] border-b border-[#85817c]"><Arrow d="M7 5h1v1h1v1h1v1h1v1H4V8h1V7h1V6h1z" /></div>
              <div className="flex flex-1 flex-col items-center justify-center gap-[2px]">
                {[0, 1, 2].map((i) => <div key={i} className="h-px w-[7px] bg-[#b5b2ad]" />)}
              </div>
              <div className="relative h-[14px] border-t border-[#85817c]"><Arrow d="M4 5h7v1h-1v1H9v1H8v1H7V8H6V7H5V6H4z" /></div>
            </div>
          </div>

          <div className="flex h-[15px] w-[1841px] shrink-0 rounded-[3px] border border-[#85817c] bg-linear-to-b from-[#f8f7f5] to-[#e5e1dc]">
            <div className="relative w-[14px] border-r border-[#85817c]"><Arrow d="M9 4v7H8v-1H7V9H6V8H5V7h1V6h1V5h1V4z" /></div>
            <div className="flex flex-1 items-center justify-center gap-[2px]">
              {[0, 1, 2].map((i) => <div key={i} className="h-[7px] w-px bg-[#b5b2ad]" />)}
            </div>
            <div className="relative w-[14px] border-l border-[#85817c]"><Arrow d="M5 4h1v1h1v1h1v1h1v1H8v1H7v1H6v1H5z" /></div>
          </div>
        </div>
      </div>
    </div>
  );
}
